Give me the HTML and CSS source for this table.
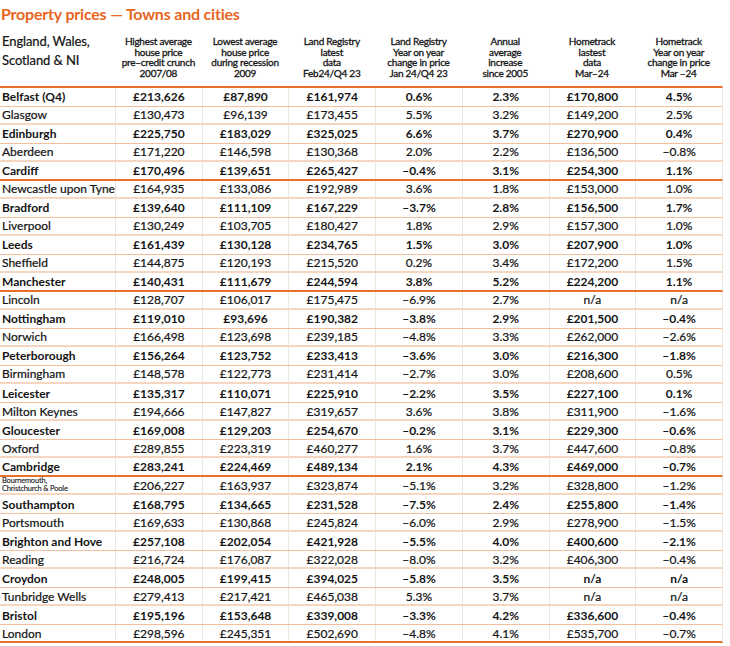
FILE: index.html
```html
<!DOCTYPE html>
<html lang="en">
<head>
    <meta charset="UTF-8">
    <meta name="viewport" content="width=device-width, initial-scale=1.0">
    <title>Property prices — Towns and cities</title>
    <link rel="stylesheet" href="styles.css">
</head>
<body>
    <h1 class="title">Property prices — Towns and cities</h1>
    <div class="prices">
        <div class="head">
            <div class="head-region">England, Wales,<br>Scotland &amp; NI</div>
            <div>Highest average<br>house price<br>pre–credit crunch<br>2007/08</div>
            <div>Lowest average<br>house price<br>during recession<br>2009</div>
            <div>Land Registry<br>latest<br>data<br>Feb24/Q4 23</div>
            <div>Land Registry<br>Year on year<br>change in price<br>Jan 24/Q4 23</div>
            <div>Annual<br>average<br>increase<br>since 2005</div>
            <div>Hometrack<br>lastest<br>data<br>Mar–24</div>
            <div>Hometrack<br>Year on year<br>change in price<br>Mar –24</div>
        </div>
        <div id="rows"></div>
    </div>

    <script>
        const rows = [
            ['Belfast (Q4)', '£213,626', '£87,890', '£161,974', '0.6%', '2.3%', '£170,800', '4.5%'],
            ['Glasgow', '£130,473', '£96,139', '£173,455', '5.5%', '3.2%', '£149,200', '2.5%'],
            ['Edinburgh', '£225,750', '£183,029', '£325,025', '6.6%', '3.7%', '£270,900', '0.4%'],
            ['Aberdeen', '£171,220', '£146,598', '£130,368', '2.0%', '2.2%', '£136,500', '–0.8%'],
            ['Cardiff', '£170,496', '£139,651', '£265,427', '–0.4%', '3.1%', '£254,300', '1.1%', 'end'],
            ['Newcastle upon Tyne', '£164,935', '£133,086', '£192,989', '3.6%', '1.8%', '£153,000', '1.0%'],
            ['Bradford', '£139,640', '£111,109', '£167,229', '–3.7%', '2.8%', '£156,500', '1.7%'],
            ['Liverpool', '£130,249', '£103,705', '£180,427', '1.8%', '2.9%', '£157,300', '1.0%'],
            ['Leeds', '£161,439', '£130,128', '£234,765', '1.5%', '3.0%', '£207,900', '1.0%'],
            ['Sheffield', '£144,875', '£120,193', '£215,520', '0.2%', '3.4%', '£172,200', '1.5%'],
            ['Manchester', '£140,431', '£111,679', '£244,594', '3.8%', '5.2%', '£224,200', '1.1%', 'end'],
            ['Lincoln', '£128,707', '£106,017', '£175,475', '–6.9%', '2.7%', 'n/a', 'n/a'],
            ['Nottingham', '£119,010', '£93,696', '£190,382', '–3.8%', '2.9%', '£201,500', '–0.4%'],
            ['Norwich', '£166,498', '£123,698', '£239,185', '–4.8%', '3.3%', '£262,000', '–2.6%'],
            ['Peterborough', '£156,264', '£123,752', '£233,413', '–3.6%', '3.0%', '£216,300', '–1.8%'],
            ['Birmingham', '£148,578', '£122,773', '£231,414', '–2.7%', '3.0%', '£208,600', '0.5%'],
            ['Leicester', '£135,317', '£110,071', '£225,910', '–2.2%', '3.5%', '£227,100', '0.1%'],
            ['Milton Keynes', '£194,666', '£147,827', '£319,657', '3.6%', '3.8%', '£311,900', '–1.6%'],
            ['Gloucester', '£169,008', '£129,203', '£254,670', '–0.2%', '3.1%', '£229,300', '–0.6%'],
            ['Oxford', '£289,855', '£223,319', '£460,277', '1.6%', '3.7%', '£447,600', '–0.8%'],
            ['Cambridge', '£283,241', '£224,469', '£489,134', '2.1%', '4.3%', '£469,000', '–0.7%', 'end'],
            ['Bournemouth,<br>Christchurch &amp; Poole', '£206,227', '£163,937', '£323,874', '–5.1%', '3.2%', '£328,800', '–1.2%', 'small'],
            ['Southampton', '£168,795', '£134,665', '£231,528', '–7.5%', '2.4%', '£255,800', '–1.4%'],
            ['Portsmouth', '£169,633', '£130,868', '£245,824', '–6.0%', '2.9%', '£278,900', '–1.5%'],
            ['Brighton and Hove', '£257,108', '£202,054', '£421,928', '–5.5%', '4.0%', '£400,600', '–2.1%'],
            ['Reading', '£216,724', '£176,087', '£322,028', '–8.0%', '3.2%', '£406,300', '–0.4%'],
            ['Croydon', '£248,005', '£199,415', '£394,025', '–5.8%', '3.5%', 'n/a', 'n/a'],
            ['Tunbridge Wells', '£279,413', '£217,421', '£465,038', '5.3%', '3.7%', 'n/a', 'n/a'],
            ['Bristol', '£195,196', '£153,648', '£339,008', '–3.3%', '4.2%', '£336,600', '–0.4%'],
            ['London', '£298,596', '£245,351', '£502,690', '–4.8%', '4.1%', '£535,700', '–0.7%', 'end']
        ];

        const rowsElement = document.getElementById('rows');

        rows.forEach(function(row, i) {
            const line = document.createElement('div');
            line.className = 'row ' + (i % 2 === 0 ? 'strong' : 'plain');
            if (row[8] === 'end') line.classList.add('group-end');

            row.slice(0, 8).forEach(function(value, j) {
                const cell = document.createElement('div');
                cell.className = j === 0 ? 'cell place' : 'cell';
                if (j === 0 && row[8] === 'small') cell.classList.add('place-small');
                cell.innerHTML = value;
                line.appendChild(cell);
            });

            rowsElement.appendChild(line);
        });
    </script>
</body>
</html>
```

FILE: styles.css
```css
body {
    margin: 0;
    background-color: #fff;
    color: #141414;
    font-family: Lato, "Open Sans", sans-serif;
}

.title {
    margin: 0;
    padding: 4px 0 0 1px;
    height: 26px;
    box-sizing: border-box;
    font-size: 16px;
    font-weight: 700;
    color: #e8661f;
    letter-spacing: -0.2px;
    line-height: 20px;
}

.prices {
    width: 723px;
}

.head {
    display: grid;
    grid-template-columns: 115px repeat(7, 1fr);
    height: 62px;
    box-sizing: border-box;
    border-bottom: 2px solid #e8702a;
    border-right: 1px solid transparent;
}

.head > div {
    align-self: end;
    padding-bottom: 8px;
    text-align: center;
    font-size: 10px;
    font-weight: 400;
    -webkit-text-stroke: 0.3px currentColor;
    line-height: 10.5px;
    letter-spacing: -0.25px;
}

.head .head-region {
    align-self: start;
    padding: 6px 0 0 2px;
    text-align: left;
    font-size: 13px;
    -webkit-text-stroke: 0.22px currentColor;
    line-height: 19px;
    letter-spacing: -0.1px;
}

.row {
    display: grid;
    grid-template-columns: 115px repeat(7, 1fr);
    height: 18.53px;
    box-sizing: border-box;
    border-right: 1px solid #ebe6da;
    font-size: 12px;
}

.row.strong {
    font-weight: 700;
    border-bottom: 1px solid #f3bf9c;
}

.row.plain {
    font-weight: 400;
    -webkit-text-stroke: 0.22px currentColor;
    border-bottom: 2px solid #f7d6c0;
}

.row.group-end {
    border-bottom: 2px solid #e8702a;
}

.cell {
    display: flex;
    align-items: center;
    justify-content: center;
    border-left: 1px solid #ebe6da;
    white-space: nowrap;
}

.cell.place {
    justify-content: flex-start;
    padding-left: 2px;
    border-left: none;
}

.cell.place-small {
    font-size: 7.5px;
    line-height: 8.5px;
    letter-spacing: -0.2px;
    -webkit-text-stroke: 0.1px currentColor;
    white-space: normal;
}
```
